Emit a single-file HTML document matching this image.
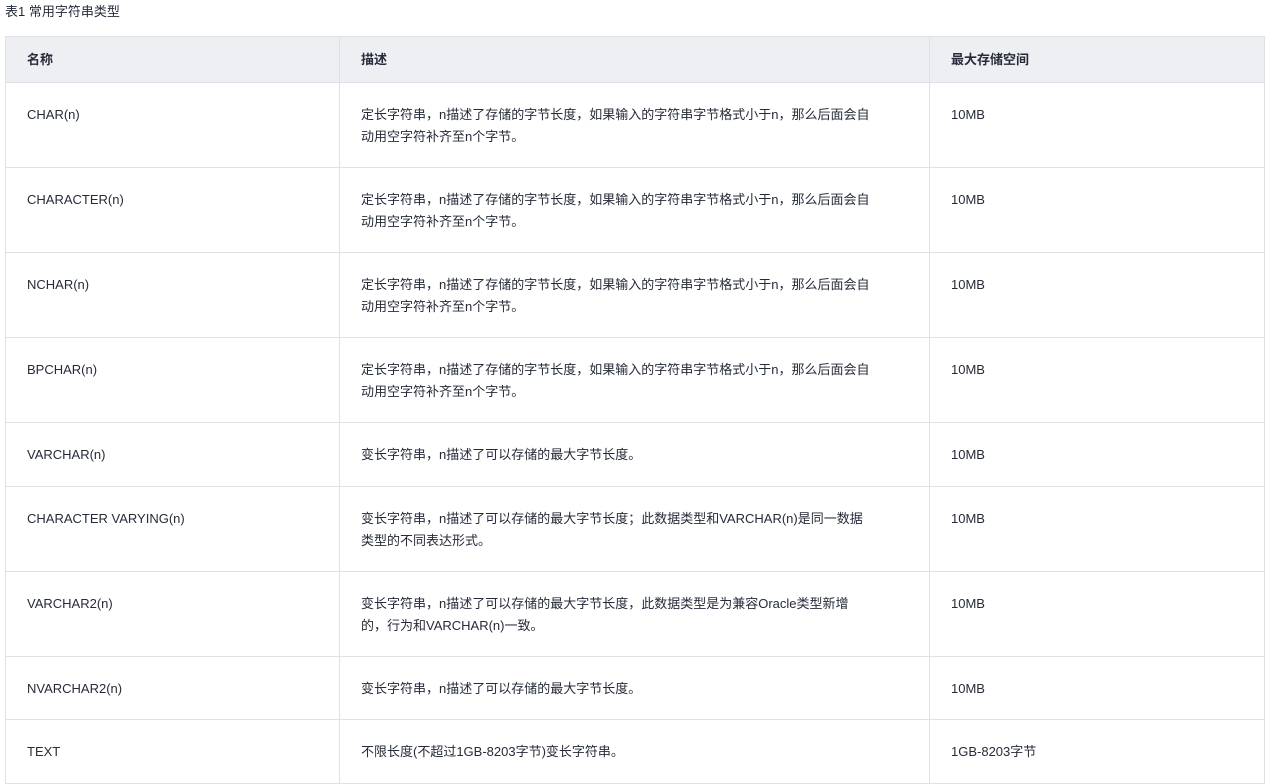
<!DOCTYPE html><html><head><meta charset="utf-8"><style>
body{margin:0;background:#fff;font-family:"Liberation Sans","Noto Sans CJK SC",sans-serif;color:#252b3a;font-size:13px}
.cap{position:absolute;left:5px;top:3px;font-size:13px;line-height:18px;color:#252b3a}
table{position:absolute;left:5px;top:36px;border-collapse:collapse;table-layout:fixed;width:1259px}
td,th{border:1px solid #dfe1e6;padding:21px 20px 0 21px;vertical-align:top;line-height:22px;text-align:left;box-sizing:border-box}
td.d{padding-right:57px}
th{background:#eeeff3;font-weight:bold;padding-top:12px;vertical-align:top}
</style></head><body>
<div class="cap">表1 常用字符串类型</div>
<table>
<colgroup><col style="width:334px"><col style="width:590px"><col style="width:335px"></colgroup>
<tr style="height:46px"><th>名称</th><th>描述</th><th>最大存储空间</th></tr>
<tr style="height:85px"><td>CHAR(n)</td><td class="d">定长字符串，n描述了存储的字节长度，如果输入的字符串字节格式小于n，那么后面会自动用空字符补齐至n个字节。</td><td>10MB</td></tr>
<tr style="height:85px"><td>CHARACTER(n)</td><td class="d">定长字符串，n描述了存储的字节长度，如果输入的字符串字节格式小于n，那么后面会自动用空字符补齐至n个字节。</td><td>10MB</td></tr>
<tr style="height:85px"><td>NCHAR(n)</td><td class="d">定长字符串，n描述了存储的字节长度，如果输入的字符串字节格式小于n，那么后面会自动用空字符补齐至n个字节。</td><td>10MB</td></tr>
<tr style="height:85px"><td>BPCHAR(n)</td><td class="d">定长字符串，n描述了存储的字节长度，如果输入的字符串字节格式小于n，那么后面会自动用空字符补齐至n个字节。</td><td>10MB</td></tr>
<tr style="height:64px"><td>VARCHAR(n)</td><td class="d">变长字符串，n描述了可以存储的最大字节长度。</td><td>10MB</td></tr>
<tr style="height:85px"><td>CHARACTER VARYING(n)</td><td class="d">变长字符串，n描述了可以存储的最大字节长度；此数据类型和VARCHAR(n)是同一数据类型的不同表达形式。</td><td>10MB</td></tr>
<tr style="height:85px"><td>VARCHAR2(n)</td><td class="d">变长字符串，n描述了可以存储的最大字节长度，此数据类型是为兼容Oracle类型新增的，行为和VARCHAR(n)一致。</td><td>10MB</td></tr>
<tr style="height:63px"><td>NVARCHAR2(n)</td><td class="d">变长字符串，n描述了可以存储的最大字节长度。</td><td>10MB</td></tr>
<tr style="height:64px"><td>TEXT</td><td class="d">不限长度(不超过1GB-8203字节)变长字符串。</td><td>1GB-8203字节</td></tr>
</table>
</body></html>
